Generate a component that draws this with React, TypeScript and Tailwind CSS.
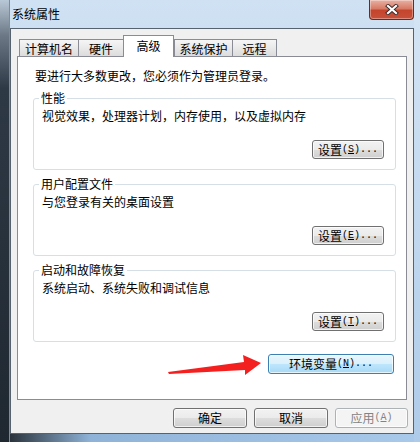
import React from 'react'

const font = { fontFamily: '"Noto Sans CJK SC", "Noto Sans", sans-serif' }

// half-width ascii like the old bitmap font
function Ascii({ children }: { children: React.ReactNode }) {
  return <span className="font-['Liberation_Mono'] text-[10px]">{children}</span>
}

type BtnProps = {
  label: string
  keyChar?: string
  dots?: boolean
  className?: string
  kind?: 'normal' | 'hot' | 'disabled'
}

function WinButton({ label, keyChar, dots, className, kind = 'normal' }: BtnProps) {
  const look =
    kind === 'hot'
      ? 'border-[#3c7fb1] bg-[linear-gradient(to_bottom,#eaf6fd_0%,#d9f0fc_50%,#bee6fd_51%,#a7d9f5_100%)] text-black'
      : kind === 'disabled'
      ? 'border-[#adb2b5] bg-[#f4f4f4] text-[#838383]'
      : 'border-[#707070] bg-[linear-gradient(to_bottom,#f2f2f2_0%,#ebebeb_50%,#dddddd_51%,#cfcfcf_100%)] text-black'
  return (
    <div
      className={`flex items-center justify-center border rounded-[3px] shadow-[inset_0_0_0_1px_rgba(255,255,255,0.7)] text-[12px] leading-[14px] ${look} ${className ?? ''}`}
    >
      <span>{label}</span>
      {keyChar && (
        <Ascii>
          (<span className="underline underline-offset-1">{keyChar}</span>)
        </Ascii>
      )}
      {dots && <Ascii>...</Ascii>}
    </div>
  )
}

const tabs = [
  { name: '计算机名', w: 'w-[60px]' },
  { name: '硬件', w: 'w-[46px]' },
  { name: '高级', w: 'w-[51px]', active: true },
  { name: '系统保护', w: 'w-[59px]' },
  { name: '远程', w: 'w-[45px]' },
]

const groups = [
  { title: '性能', desc: '视觉效果，处理器计划，内存使用，以及虚拟内存', key: 'S' },
  { title: '用户配置文件', desc: '与您登录有关的桌面设置', key: 'E' },
  { title: '启动和故障恢复', desc: '系统启动、系统失败和调试信息', key: 'T' },
]

function GroupBox({ title, desc, k }: { title: string; desc: string; k: string }) {
  return (
    <fieldset className="mt-[7px] border border-[#d5dfe5] rounded-[3px] pl-[8px] pr-[11px] pb-[10px]">
      <legend className="-ml-[3px] px-[2px] text-[12px] leading-[14px]">{title}</legend>
      <div className="mt-[4px] text-[12px] leading-[14px]">{desc}</div>
      <div className="flex justify-end mt-[17px]">
        <WinButton label="设置" keyChar={k} dots className="w-[72px] h-[19px]" />
      </div>
    </fieldset>
  )
}

export default function App() {
  return (
    <div className="relative w-[420px] h-[442px] flex overflow-hidden text-black bg-[linear-gradient(to_bottom,#cfe1f3_0%,#c0d7ee_50%,#aecbe9_100%)]" style={font}>
      {/* left window frame */}
      <div className="w-[10px] h-full bg-[linear-gradient(to_bottom,#b9c8d6_0%,#6c7886_8%,#2e3946_20%,#1f2830_100%)] border-r border-[#7f8c98]" />

      <div className="w-[404px] flex flex-col">
        {/* title bar */}
        <div className="h-[28px] flex justify-between items-start">
          <span className="mt-[7px] pl-[2px] text-[12px] leading-[14px]">系统属性</span>
          <div className="w-[45px] h-[20px] flex items-center justify-center rounded-b-[4px] border border-t-0 border-[#6a2a20] bg-[linear-gradient(to_bottom,#e9b1a3_0%,#d77a66_45%,#c5442c_55%,#c8503a_100%)] shadow-[inset_0_0_0_1px_rgba(255,255,255,0.35)]">
            <svg width="14" height="11" viewBox="0 0 14 11">
              <path d="M3 2 L11 9 M11 2 L3 9" stroke="#3a2a2a" strokeWidth="4" strokeLinecap="square" />
              <path d="M3 2 L11 9 M11 2 L3 9" stroke="#ffffff" strokeWidth="2.2" strokeLinecap="square" />
            </svg>
          </div>
        </div>

        {/* client area */}
        <div className="h-[406px] border border-[#56636f] bg-[#f0f0f0] flex flex-col pt-[6px]">
          <div className="ml-[6px] mr-[6px]">
            {/* tabs */}
            <div className="h-[21px] flex items-end pl-[2px]">
              {tabs.map((t) =>
                t.active ? (
                  <div
                    key={t.name}
                    className={`${t.w} h-[22px] -mb-px relative z-10 bg-white border border-b-0 border-[#898c95] flex items-center justify-center pb-[2px] text-[12px] leading-[14px]`}
                  >
                    {t.name}
                  </div>
                ) : (
                  <div
                    key={t.name}
                    className={`${t.w} h-[17px] border border-b-0 border-[#898c95] -mr-px last:mr-0 flex items-center justify-center pt-[1px] text-[12px] leading-[14px] bg-[linear-gradient(to_bottom,#f5f5f5_0%,#e9e9e9_50%,#dcdcdc_100%)]`}
                  >
                    {t.name}
                  </div>
                )
              )}
            </div>

            {/* tab page */}
            <div className="h-[344px] bg-white border border-[#898c95] pt-[12px] pl-[15px] pr-[10px] flex flex-col">
              <div className="pl-[2px] text-[12px] leading-[14px]">要进行大多数更改，您必须作为管理员登录。</div>
              <div className="mt-[1px]">
                {groups.map((g) => (
                  <GroupBox key={g.title} title={g.title} desc={g.desc} k={g.key} />
                ))}
              </div>
              <div className="flex justify-end mt-[12px] pr-[2px]">
                <WinButton label="环境变量" keyChar="N" dots kind="hot" className="w-[126px] h-[20px]" />
              </div>
            </div>
          </div>

          {/* dialog buttons */}
          <div className="flex justify-end gap-[7px] mt-[8px] pr-[5px]">
            <WinButton label="确定" className="w-[74px] h-[20px]" />
            <WinButton label="取消" className="w-[74px] h-[20px]" />
            <WinButton label="应用" keyChar="A" kind="disabled" className="w-[73px] h-[20px]" />
          </div>
        </div>

        <div className="h-[8px] bg-[linear-gradient(to_right,#2a333c_0%,#8fb3d8_20%,#a9c9ea_100%)]" />
      </div>

      <div className="w-[6px] h-full bg-[linear-gradient(to_bottom,#d5e5f5,#aecbe9)]" />

      {/* red arrow annotation */}
      <svg className="absolute left-[165px] top-[350px]" width="100" height="28" viewBox="0 0 100 28">
        <polygon points="3,22 79,12 78,5 96,13 80,25 80,20 4,24" fill="#f41f1f" />
      </svg>
    </div>
  )
}
